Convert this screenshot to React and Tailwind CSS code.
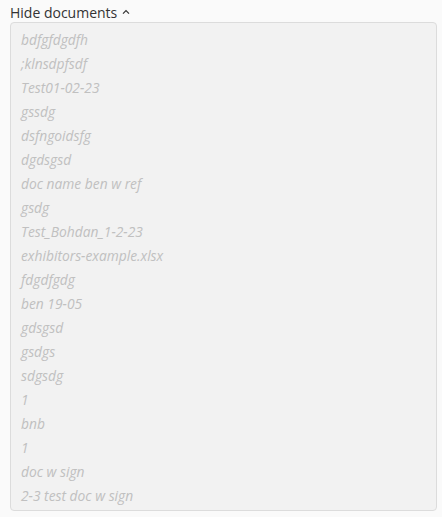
import React, { useState } from 'react';

const docs = [
    'bdfgfdgdfh',
    ';klnsdpfsdf',
    'Test01-02-23',
    'gssdg',
    'dsfngoidsfg',
    'dgdsgsd',
    'doc name ben w ref',
    'gsdg',
    'Test_Bohdan_1-2-23',
    'exhibitors-example.xlsx',
    'fdgdfgdg',
    'ben 19-05',
    'gdsgsd',
    'gsdgs',
    'sdgsdg',
    '1',
    'bnb',
    '1',
    'doc w sign',
    '2-3 test doc w sign',
];

function App() {
    const [open, setOpen] = useState(true);

    return (
        <div className="min-h-screen bg-[#fafafa] px-[10px] pt-[2px] text-[14px]" style={{ fontFamily: '"Open Sans", sans-serif' }}>
            <button
                type="button"
                onClick={() => setOpen(!open)}
                className="flex items-center gap-[5px] h-[20px] text-[#333]"
            >
                {open ? 'Hide documents' : 'Show documents'}
                <svg width="8" height="6" viewBox="0 0 8 6" className={open ? '' : 'rotate-180'}>
                    <path d="M1 4.6 L4 1.6 L7 4.6" fill="none" stroke="#333" strokeWidth="1.2" />
                </svg>
            </button>
            {open && (
                <div className="w-[427px] bg-[#f2f2f2] border border-[#dcdcdc] rounded-[4px] pt-[5px] pb-[2px] px-[10px]">
                    {docs.map((name, i) => (
                        <div key={i} className="h-[24px] leading-[24px] italic text-[#c0c0c0] text-[13.8px]">
                            {name}
                        </div>
                    ))}
                </div>
            )}
        </div>
    );
}

export default App;
